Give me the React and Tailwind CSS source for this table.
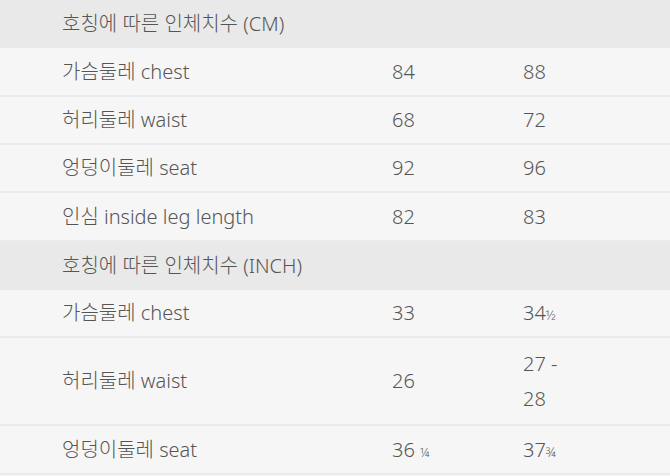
import React from 'react';

const font = { fontFamily: '"Noto Sans", "Noto Sans CJK KR", sans-serif' };

function Header({ title }) {
  return (
    <div className="h-[48px] bg-[#e9e9e9] flex items-center pl-[62px] text-[20px] font-light text-[#555]">
      {title}
    </div>
  );
}

function Row({ label, a, b, h = 'h-[48px]' }) {
  return (
    <div className={`${h} bg-[#f6f6f6] border-b-2 border-[#ebebeb] grid grid-cols-[392px_131px_1fr] items-center text-[20px] font-light text-[#555]`}>
      <div className="pl-[62px]">{label}</div>
      <div>{a}</div>
      <div>{b}</div>
    </div>
  );
}

const Frac = ({ c }) => <span className="text-[13px] tracking-tighter">{c}</span>;

export default function App() {
  return (
    <div className="w-[670px] h-[476px] bg-[#f6f6f6] overflow-hidden" style={font}>
      <Header title="호칭에 따른 인체치수 (CM)" />
      <Row h="h-[49px]" label="가슴둘레 chest" a="84" b="88" />
      <Row label="허리둘레 waist" a="68" b="72" />
      <Row label="엉덩이둘레 seat" a="92" b="96" />
      <Row h="h-[49px]" label="인심 inside leg length" a="82" b="83" />
      <Header title="호칭에 따른 인체치수 (INCH)" />
      <Row label="가슴둘레 chest" a="33" b={<>34<Frac c="½" /></>} />
      <Row
        h="h-[88px]"
        label="허리둘레 waist"
        a="26"
        b={<div className="leading-[35px]">27 -<br />28</div>}
      />
      <Row h="h-[49px]" label="엉덩이둘레 seat" a={<>36 <Frac c="¼" /></>} b={<>37<Frac c="¾" /></>} />
    </div>
  );
}
